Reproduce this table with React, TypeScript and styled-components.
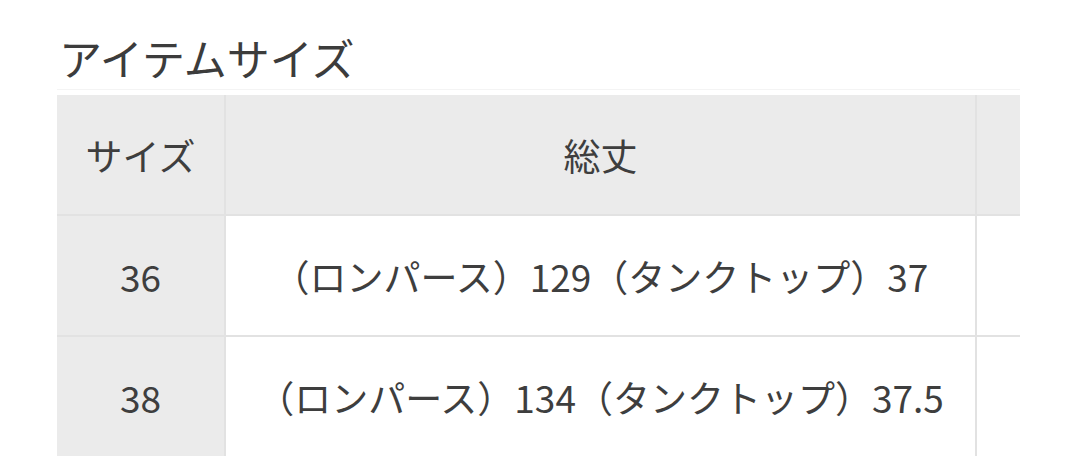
import React from "react";
import styled, { createGlobalStyle } from "styled-components";

const rows = [
  { size: "36", length: "（ロンパース）129（タンクトップ）37" },
  { size: "38", length: "（ロンパース）134（タンクトップ）37.5" },
];

const App: React.FC = () => {
  return (
    <Page>
      <GlobalStyle />
      <Title>アイテムサイズ</Title>
      <Scroller>
        <Table>
          <thead>
            <tr>
              <HeadCell $width={167}>サイズ</HeadCell>
              <HeadCell $width={749}>総丈</HeadCell>
              <HeadCell $width={200}></HeadCell>
            </tr>
          </thead>
          <tbody>
            {rows.map(row => (
              <tr key={row.size}>
                <HeadCell as="th">{row.size}</HeadCell>
                <Cell>{row.length}</Cell>
                <Cell></Cell>
              </tr>
            ))}
          </tbody>
        </Table>
      </Scroller>
    </Page>
  );
};

const GlobalStyle = createGlobalStyle`
  body {
    margin: 0;
    background: #fff;
    font-family: "Noto Sans CJK JP", "Noto Sans", sans-serif;
    color: #3a3a3a;
  }
`;

const Page = styled.div`
  padding: 27px 0 0 57px;
`;

const Title = styled.h2`
  margin: 0 0 2px 2px;
  font-size: 43px;
  font-weight: 400;
  line-height: 60px;
  color: #3c3c3c;
`;

const Scroller = styled.div`
  width: 963px;
  overflow: hidden;
  border-top: 1px solid #f4f4f4;
  padding-top: 5px;
`;

const Table = styled.table`
  border-collapse: collapse;
  table-layout: fixed;
  width: 1116px;

  td,
  th {
    height: 119px;
    padding: 0;
    border: 2px solid #e2e2e2;
    text-align: center;
    vertical-align: middle;
    font-size: 37px;
    font-weight: 400;
    color: #3e3e3e;
  }

  tr:first-child th {
    border-top: none;
  }

  tr th:first-child {
    border-left: none;
  }
`;

const HeadCell = styled.th<{ $width?: number }>`
  width: ${props => (props.$width ? `${props.$width}px` : "auto")};
  background: #ebebeb;
`;

const Cell = styled.td`
  background: #fff;
`;

export default App;
